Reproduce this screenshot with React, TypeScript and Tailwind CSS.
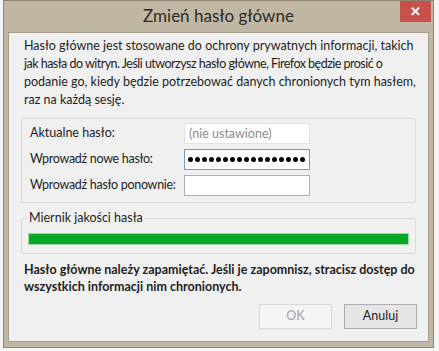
import React from "react"

const font = { fontFamily: 'Lato, "Noto Sans", sans-serif' }

function Dots({ n }: { n: number }) {
  return (
    <div className="flex items-center gap-[2px]">
      {Array.from({ length: n }).map((_, i) => (
        <span key={i} className="block w-[5px] h-[5px] rounded-full bg-black" />
      ))}
    </div>
  )
}

export default function App() {
  return (
    <div className="w-[439px] h-[351px] bg-[#f5f5f5] flex overflow-hidden text-[#1e1e1e]" style={font}>
      <div className="ml-[3px] w-[431px] h-[348px] bg-[#bfb7a4] border border-[#8d8571] flex flex-col">
        {/* title bar */}
        <div className="h-[31px] flex items-start relative">
          <div className="flex-1 text-center text-[17px] leading-[30px] text-[#2b2b2b]">Zmień hasło główne</div>
          <div className="absolute right-[2px] top-0 w-[31px] h-[21px] bg-[#c9514c] flex items-center justify-center text-white text-[13px] font-bold">
            ✕
          </div>
        </div>
        {/* client */}
        <div className="mx-[4px] flex-1 mb-[5px] bg-[#f0f0f0] border border-[#a59d8a] flex flex-col px-[15px]">
          <p className="text-[12.5px] leading-[18px] mt-[4px] whitespace-nowrap">
            Hasło główne jest stosowane do ochrony prywatnych informacji, takich
            <br />
            <span className="tracking-[-0.52px]">jak hasła do witryn. Jeśli utworzysz hasło główne, Firefox będzie prosić o</span>
            <br />
            podanie go, kiedy będzie potrzebować danych chronionych tym hasłem,
            <br />
            raz na każdą sesję.
          </p>

          <div className="mt-[9px] -mx-[3px] border border-[#dcdcdc] rounded-[2px] h-[85px] pl-[8px] pr-[8px] py-[4px] flex flex-col gap-[5px]">
            <div className="flex items-center h-[21px]">
              <span className="w-[154px] text-[12.5px] whitespace-nowrap">Aktualne hasło:</span>
              <div className="w-[126px] h-[21px] bg-white border border-[#e3e3e3] text-[12.5px] text-[#8c8c8c] px-[4px] leading-[19px]">
                (nie ustawione)
              </div>
            </div>
            <div className="flex items-center h-[21px]">
              <span className="w-[154px] text-[12.5px] whitespace-nowrap tracking-[-0.3px]">Wprowadź nowe hasło:</span>
              <div className="w-[126px] h-[21px] bg-white border border-[#6f9ccc] px-[3px] flex items-center">
                <Dots n={17} />
              </div>
            </div>
            <div className="flex items-center h-[21px]">
              <span className="w-[154px] text-[12.5px] whitespace-nowrap tracking-[-0.3px]">Wprowadź hasło ponownie:</span>
              <div className="w-[126px] h-[21px] bg-white border border-[#abadb3]" />
            </div>
          </div>

          <div className="mt-[15px] -mx-[3px] border border-[#dcdcdc] rounded-[2px] h-[36px] relative px-[6px] pt-[14px]">
            <span className="absolute left-[6px] -top-[9px] bg-[#f0f0f0] px-[1px] text-[12.5px] leading-[16px]">
              Miernik jakości hasła
            </span>
            <div className="h-[12px] border border-[#9fd4a8] bg-[#07a82a]" />
          </div>

          <p className="mt-[7px] text-[12.5px] leading-[17px] font-bold whitespace-nowrap">
            Hasło główne należy zapamiętać. Jeśli je zapomnisz, stracisz dostęp do
            <br />
            wszystkich informacji nim chronionych.
          </p>

          <div className="mt-[9px] flex justify-end gap-[12px] -mr-[4px]">
            <div className="w-[73px] h-[25px] border border-[#d9d9d9] bg-[#f4f4f4] text-[12.5px] text-[#a3a3a3] flex items-center justify-center">
              OK
            </div>
            <div className="w-[73px] h-[25px] border border-[#adadad] bg-[#e5e5e5] text-[12.5px] text-[#1e1e1e] flex items-center justify-center">
              Anuluj
            </div>
          </div>
        </div>
      </div>
    </div>
  )
}
